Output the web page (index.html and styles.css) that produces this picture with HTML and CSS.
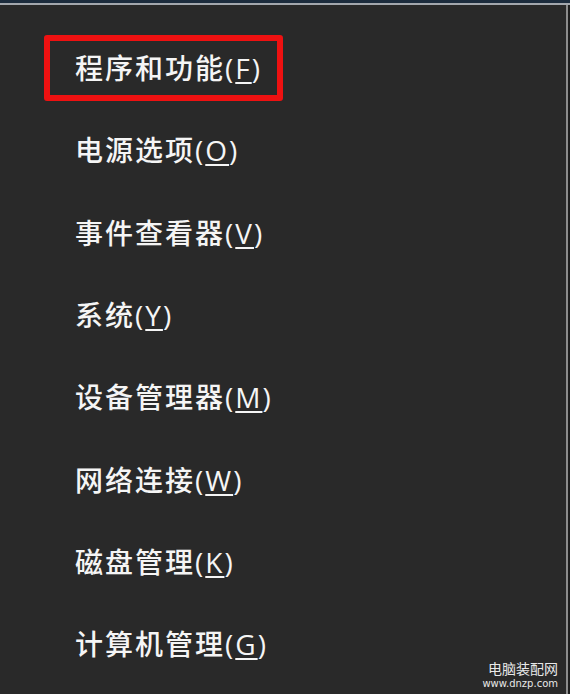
FILE: index.html
```html
<!DOCTYPE html>
<html lang="zh-CN">
<head>
    <meta charset="UTF-8">
    <meta name="viewport" content="width=device-width, initial-scale=1.0">
    <title>快捷菜单</title>
    <link rel="stylesheet" href="styles.css">
</head>
<body>
    <div class="topbar"></div>
    <div class="panel">
        <ul class="menu">
            <li class="item"><span class="label marked">程序和功能(<u>F</u>)</span></li>
            <li class="item"><span class="label">电源选项(<u>O</u>)</span></li>
            <li class="item"><span class="label">事件查看器(<u>V</u>)</span></li>
            <li class="item"><span class="label">系统(<u>Y</u>)</span></li>
            <li class="item"><span class="label">设备管理器(<u>M</u>)</span></li>
            <li class="item"><span class="label">网络连接(<u>W</u>)</span></li>
            <li class="item"><span class="label">磁盘管理(<u>K</u>)</span></li>
            <li class="item"><span class="label">计算机管理(<u>G</u>)</span></li>
        </ul>
        <div class="watermark">
            <div class="wm-name">电脑装配网</div>
            <div class="wm-url">www.dnzp.com</div>
        </div>
    </div>
</body>
</html>
```

FILE: styles.css
```css
* {
    box-sizing: border-box;
}

html {
    background-color: #1e1e1e;
}

body {
    margin: 0;
    width: 570px;
    height: 694px;
    overflow: hidden;
    font-family: "Open Sans", "Noto Sans CJK SC", sans-serif;
    color: #f5f5f5;
}

.topbar {
    height: 5px;
    background-color: #1c2c3d;
    border-bottom: 2px solid #a3a7ad;
}

.panel {
    position: relative;
    width: 568px;
    height: 689px;
    background-color: #292929;
    border-right: 2px solid #8c8c8c;
    padding-top: 22px;
}

.menu {
    list-style: none;
    margin: 0;
    padding: 0 0 0 75px;
}

.item {
    height: 82.3px;
    display: flex;
    align-items: center;
}

.label {
    font-size: 28px;
    font-weight: 500;
    line-height: 40px;
    letter-spacing: 2px;
}

.label u {
    text-decoration-thickness: 2px;
    text-underline-offset: 3px;
}

.marked {
    margin-left: -31px;
    padding: 7px 15px 7px 25px;
    border: 6px solid #ee1111;
    border-radius: 3px;
}

/* site watermark in the corner */
.watermark {
    position: absolute;
    right: 8px;
    bottom: 3px;
    text-align: right;
    color: #e8e8e8;
}

.wm-name {
    font-family: "Noto Sans CJK SC", sans-serif;
    font-size: 14px;
    line-height: 17px;
}

.wm-url {
    font-family: "DejaVu Sans", sans-serif;
    font-size: 10px;
    line-height: 14px;
}
```
